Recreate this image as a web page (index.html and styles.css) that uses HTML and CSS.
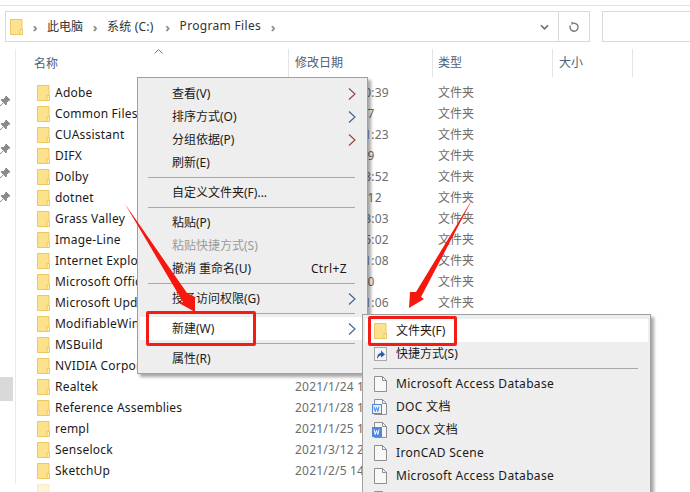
FILE: index.html
```html
<!DOCTYPE html>
<html lang="zh-CN">
<head>
<meta charset="utf-8">
<title>Program Files</title>
<link rel="stylesheet" href="styles.css">
</head>
<body>
<svg width="0" height="0" class="defs">
  <defs>
    <symbol id="folder" viewBox="0 0 13 16">
      <path d="M.5.500h11.500v15H.5z" fill="#fde28e" stroke="#ecc763"/>
      <path d="M10 10.500h2.500v5H10z" fill="#fbeeb8" stroke="#ecc763"/>
    </symbol>
    <symbol id="pin" viewBox="0 0 12 12">
      <path d="M7 1l4 4-1.500.6-2 2-.3 2.400L2 4.800l2.400-.3 2-2zM4 8l-3 3" fill="#8a8a8a" stroke="#8a8a8a"/>
    </symbol>
    <symbol id="doc" viewBox="0 0 13 16">
      <path d="M.5.500h8l4 4v11H.5z" fill="#f8f8f8" stroke="#8f8f8f"/>
      <path d="M8.500.5v4h4" fill="none" stroke="#8f8f8f"/>
    </symbol>
    <symbol id="chev" viewBox="0 0 8 12">
      <path d="M1 .5l6 5.500-6 5.500" fill="none" stroke="#3f5f92" stroke-width="1.100"/>
    </symbol>
    <symbol id="chev-red" viewBox="0 0 8 12">
      <path d="M1 .5l6 5.500-6 5.500" fill="none" stroke="#94403f" stroke-width="1.100"/>
    </symbol>
  </defs>
</svg>

<div class="window">
  <div class="topbar">
    <div class="address">
      <svg class="addr-folder"><use href="#folder"/></svg>
      <span class="crumb-sep">›</span><span class="crumb">此电脑</span>
      <span class="crumb-sep">›</span><span class="crumb wide">系统 (C:)</span>
      <span class="crumb-sep">›</span><span class="crumb lat">Program Files</span>
      <span class="crumb-sep">›</span>
      <svg class="drop" viewBox="0 0 10 6"><path d="M1 1l4 4 4-4" fill="none" stroke="#6f6f6f" stroke-width="1.800"/></svg>
      <span class="refresh">
        <svg viewBox="0 0 12 12"><path d="M6 2.200a4 4 0 1 1-3.600 2.300" fill="none" stroke="#7a7a7a" stroke-width="1.400"/><path d="M3.500 .5l3 1.700-3 1.700z" fill="#7a7a7a"/></svg>
      </span>
    </div>
    <div class="search"></div>
  </div>

  <div class="body">
    <aside class="nav">
      <div class="pins">
        <svg class="pin"><use href="#pin"/></svg>
        <svg class="pin"><use href="#pin"/></svg>
        <svg class="pin"><use href="#pin"/></svg>
        <svg class="pin"><use href="#pin"/></svg>
        <svg class="pin"><use href="#pin"/></svg>
      </div>
      <div class="nav-selected"></div>
    </aside>
    <main class="list">
      <div class="head">
        <div class="hcell c-name">名称<svg class="sort" viewBox="0 0 9 5"><path d="M.5 4.500l4-4 4 4" fill="none" stroke="#777"/></svg></div>
        <div class="hcell c-date">修改日期</div>
        <div class="hcell c-type">类型</div>
        <div class="hcell c-size">大小</div>
      </div>
      <div class="rows">
        <div class="row"><div class="c-name"><svg class="ficon"><use href="#folder"/></svg>Adobe</div><div class="c-date">2021/1/24 10:39</div><div class="c-type">文件夹</div></div>
        <div class="row"><div class="c-name"><svg class="ficon"><use href="#folder"/></svg>Common Files</div><div class="c-date">2021/1/5 9:17</div><div class="c-type">文件夹</div></div>
        <div class="row"><div class="c-name"><svg class="ficon"><use href="#folder"/></svg>CUAssistant</div><div class="c-date">2021/1/25 11:23</div><div class="c-type">文件夹</div></div>
        <div class="row"><div class="c-name"><svg class="ficon"><use href="#folder"/></svg>DIFX</div><div class="c-date">2021/1/5 9:09</div><div class="c-type">文件夹</div></div>
        <div class="row"><div class="c-name"><svg class="ficon"><use href="#folder"/></svg>Dolby</div><div class="c-date">2021/1/24 13:52</div><div class="c-type">文件夹</div></div>
        <div class="row"><div class="c-name"><svg class="ficon"><use href="#folder"/></svg>dotnet</div><div class="c-date">2021/1/28 9:12</div><div class="c-type">文件夹</div></div>
        <div class="row"><div class="c-name"><svg class="ficon"><use href="#folder"/></svg>Grass Valley</div><div class="c-date">2021/1/26 13:03</div><div class="c-type">文件夹</div></div>
        <div class="row"><div class="c-name"><svg class="ficon"><use href="#folder"/></svg>Image-Line</div><div class="c-date">2021/1/26 15:02</div><div class="c-type">文件夹</div></div>
        <div class="row"><div class="c-name"><svg class="ficon"><use href="#folder"/></svg>Internet Explorer</div><div class="c-date">2021/1/24 11:08</div><div class="c-type">文件夹</div></div>
        <div class="row"><div class="c-name"><svg class="ficon"><use href="#folder"/></svg>Microsoft Office</div><div class="c-date">2021/1/5 9:10</div><div class="c-type">文件夹</div></div>
        <div class="row"><div class="c-name"><svg class="ficon"><use href="#folder"/></svg>Microsoft Update</div><div class="c-date">2021/1/24 11:06</div><div class="c-type">文件夹</div></div>
        <div class="row"><div class="c-name"><svg class="ficon"><use href="#folder"/></svg>ModifiableWindows</div></div>
        <div class="row"><div class="c-name"><svg class="ficon"><use href="#folder"/></svg>MSBuild</div></div>
        <div class="row"><div class="c-name"><svg class="ficon"><use href="#folder"/></svg>NVIDIA Corporation</div></div>
        <div class="row"><div class="c-name"><svg class="ficon"><use href="#folder"/></svg>Realtek</div><div class="c-date clip">2021/1/24 11:06</div></div>
        <div class="row"><div class="c-name"><svg class="ficon"><use href="#folder"/></svg>Reference Assemblies</div><div class="c-date clip">2021/1/28 14:12</div></div>
        <div class="row"><div class="c-name"><svg class="ficon"><use href="#folder"/></svg>rempl</div><div class="c-date clip">2021/1/25 11:23</div></div>
        <div class="row"><div class="c-name"><svg class="ficon"><use href="#folder"/></svg>Senselock</div><div class="c-date clip">2021/3/12 21:17</div></div>
        <div class="row"><div class="c-name"><svg class="ficon"><use href="#folder"/></svg>SketchUp</div><div class="c-date clip">2021/2/5 14:20</div></div>
        <div class="row faint"><div class="c-name"><svg class="ficon"><use href="#folder"/></svg></div></div>
      </div>
    </main>
  </div>
</div>

<div class="menu main-menu">
  <div class="mi"><span>查看(V)</span><svg class="arrow"><use href="#chev-red"/></svg></div>
  <div class="mi"><span>排序方式(O)</span><svg class="arrow"><use href="#chev"/></svg></div>
  <div class="mi"><span>分组依据(P)</span><svg class="arrow"><use href="#chev-red"/></svg></div>
  <div class="mi"><span>刷新(E)</span></div>
  <div class="sep"></div>
  <div class="mi"><span>自定义文件夹(F)...</span></div>
  <div class="sep"></div>
  <div class="mi"><span>粘贴(P)</span></div>
  <div class="mi disabled"><span>粘贴快捷方式(S)</span></div>
  <div class="mi"><span>撤消 重命名(U)</span><span class="shortcut">Ctrl+Z</span></div>
  <div class="sep"></div>
  <div class="mi"><span>授予访问权限(G)</span><svg class="arrow"><use href="#chev"/></svg></div>
  <div class="sep"></div>
  <div class="mi active"><span>新建(W)</span><svg class="arrow"><use href="#chev"/></svg></div>
  <div class="sep"></div>
  <div class="mi"><span>属性(R)</span></div>
</div>

<div class="menu sub-menu">
  <div class="si active"><svg class="sicon"><use href="#folder"/></svg><span>文件夹(F)</span></div>
  <div class="si">
    <svg class="sicon" viewBox="0 0 13 14"><rect x=".5" y=".5" width="12" height="13" fill="#f4f4f4" stroke="#a8a8a8"/><path d="M3 12c0-4 1.500-6 4-6V3.500L11 7.500 7 10.500V8.500c-1.500 0-2.500 1-4 3.500z" fill="#1f5fa8"/></svg>
    <span>快捷方式(S)</span>
  </div>
  <div class="sep"></div>
  <div class="si"><svg class="sicon"><use href="#doc"/></svg><span class="lat">Microsoft Access Database</span></div>
  <div class="si"><svg class="sicon"><use href="#doc"/><rect class="wb" x=".5" y="5.500" width="9" height="9"/><path class="wl" d="M2 7.500l1.200 5 1.300-4 1.300 4L7 7.500"/></svg><span class="lat">DOC 文档</span></div>
  <div class="si"><svg class="sicon"><use href="#doc"/><rect class="wb solid" x=".5" y="5.500" width="9" height="9"/><path class="wl solid" d="M2 7.500l1.200 5 1.300-4 1.300 4L7 7.500"/></svg><span class="lat">DOCX 文档</span></div>
  <div class="si"><svg class="sicon"><use href="#doc"/></svg><span class="lat">IronCAD Scene</span></div>
  <div class="si"><svg class="sicon"><use href="#doc"/></svg><span class="lat">Microsoft Access Database</span></div>
  <div class="si"><svg class="sicon"><use href="#doc"/></svg></div>
</div>

<div class="mark mark-new"></div>
<div class="mark mark-folder"></div>

<svg class="arrows" viewBox="0 0 690 492">
  <path d="M125 204L187 293 195 297 195 312 179 303 183 302z" fill="#f6170f"/>
  <path d="M473 198L421 297 424 299 409 308 410 292 416 292z" fill="#f6170f"/>
</svg>
</body>
</html>
```

FILE: styles.css
```css
* { box-sizing: border-box; }
html, body { margin: 0; padding: 0; }
body {
  width: 690px;
  height: 492px;
  overflow: hidden;
  background: #fff;
  position: relative;
  font-family: "Noto Sans", "Noto Sans CJK SC", sans-serif;
  font-size: 12px;
  color: #1a1a1a;
}
.defs { position: absolute; }
.lat { letter-spacing: .32px; }

.window { height: 492px; display: flex; flex-direction: column; }

.topbar {
  height: 44px;
  flex: none;
  margin-top: 5px;
  border-top: 1px solid #e0e0e0;
  padding: 5px 0 0 5px;
  display: flex;
  align-items: flex-start;
  gap: 12px;
}
.address {
  width: 585px;
  height: 31px;
  border: 1px solid #d9d9d9;
  display: flex;
  align-items: center;
  padding-left: 4px;
  color: #333;
}
.addr-folder { width: 13px; height: 16px; margin-right: 5px; }
.crumb-sep { width: 14px; text-align: center; color: #888; font-weight: 700; font-size: 13px; line-height: 16px; }
.crumb { padding: 0 5px 2px 5px; }
.crumb.wide { padding-right: 7px; letter-spacing: .2px; }
.drop { width: 9px; height: 6px; margin-left: auto; margin-right: 9px; }
.refresh {
  width: 31px;
  height: 29px;
  border-left: 1px solid #d9d9d9;
  display: flex;
  align-items: center;
  justify-content: center;
}
.refresh svg { width: 12px; height: 12px; }
.search { flex: 1; height: 31px; border: 1px solid #d9d9d9; border-right: 0; }

.body { flex: 1; display: flex; min-height: 0; }
.nav { width: 16px; height: 435px; border-right: 1px solid #eaeaea; flex: none; padding-top: 46px; }
.pins { display: flex; flex-direction: column; gap: 12px; }
.pin { width: 12px; height: 12px; display: block; margin-left: -1px; }
.nav-selected { width: 13px; height: 24px; background: #d9d9d9; margin-top: 174px; }

.list { flex: 1; min-width: 0; }
.head { display: flex; height: 28px; padding-left: 18px; }
.head .hcell {
  color: #4d6078;
  border-right: 1px solid #e5e5e5;
  line-height: 27px;
  position: relative;
}
.c-name { flex: none; display: flex; align-items: center; white-space: nowrap; overflow: hidden; }
.head .c-name { width: 255px; overflow: visible; }
.row .c-name { width: 252px; letter-spacing: .22px; }
.c-date { width: 144px; flex: none; padding-left: 6px; color: #6d6d6d; white-space: nowrap; letter-spacing: .2px; }
.c-date.clip { width: 73px; overflow: hidden; }
.c-type { width: 120px; flex: none; padding-left: 5px; color: #6d6d6d; }
.c-size { width: 80px; flex: none; padding-left: 6px; }
.head .c-date, .head .c-type, .head .c-size { color: #4d6078; letter-spacing: 0; }
.sort { position: absolute; left: 120px; top: 0; width: 9px; height: 5px; }

.rows { padding-top: 5px; height: 415px; overflow: hidden; }
.row { display: flex; height: 21px; line-height: 21px; padding-left: 21px; color: #1a1a1a; }
.row.faint { opacity: .35; }
.ficon { width: 13px; height: 16px; margin-right: 5px; flex: none; }

.menu {
  position: absolute;
  background: #eeeeee;
  border: 1px solid #a0a0a0;
  box-shadow: 3px 3px 3px rgba(0, 0, 0, .35);
  color: #1a1a1a;
}
.main-menu { left: 137px; top: 77px; width: 231px; height: 297px; padding: 4px 2px; }
.mi {
  height: 23px;
  line-height: 23px;
  padding: 0 9px 0 32px;
  display: flex;
  justify-content: space-between;
  align-items: center;
}
.mi.disabled { color: #9b9b9b; }
.mi.active { background: #fff; }
.arrow { width: 8px; height: 12px; }
.shortcut { margin-right: 9px; letter-spacing: .4px; }
.sep { height: 1px; background: #a8a8a8; margin: 3px 10px 3px 8px; }

.sub-menu { left: 362px; top: 314px; width: 289px; height: 200px; padding: 4px 2px; }
.si {
  height: 23px;
  line-height: 23px;
  padding-left: 9px;
  display: flex;
  align-items: center;
}
.si.active { background: #fff; }
.sicon { width: 13px; height: 16px; margin-right: 9px; flex: none; overflow: visible; }
.wb { fill: #eaf1fc; stroke: #4d86e0; transform: translateX(-2px); }
.wb.solid { fill: #4d86e0; }
.wl { fill: none; stroke: #4d86e0; stroke-width: 1; transform: translateX(-2px); }
.wl.solid { stroke: #fff; }

.mark { position: absolute; border: 3px solid #f41c16; border-radius: 2px; }
.mark-new { left: 146px; top: 311px; width: 110px; height: 35px; }
.mark-folder { left: 368px; top: 316px; width: 89px; height: 30px; }
.arrows { position: absolute; left: 0; top: 0; width: 690px; height: 492px; pointer-events: none; }
```
